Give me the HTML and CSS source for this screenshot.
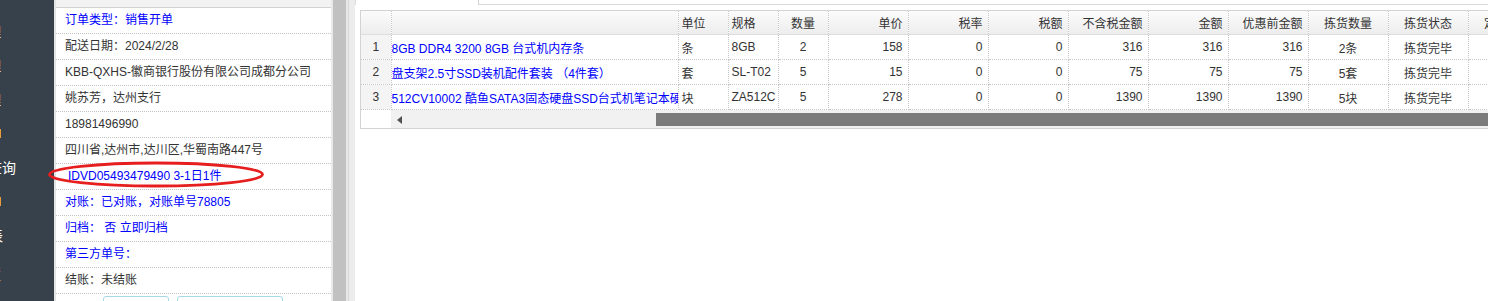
FILE: index.html
```html
<!DOCTYPE html>
<html>
<head>
	<meta charset="UTF-8">
	<meta name="viewport" content="width=device-width, initial-scale=1.0">
	<title>订单详情</title>
	<link rel="stylesheet" href="styles.css">
</head>
<body>
	<div class="page">
		<nav class="sidenav">
			<div class="nav-item"><span>订单管理</span></div>
			<div class="nav-item"><span>客户管理</span></div>
			<div class="nav-item"><span>商品管理</span></div>
			<div class="nav-item"><span class="nav-mark"></span></div>
			<div class="nav-item wide"><span>订单查询</span></div>
			<div class="nav-item"><span class="nav-mark"></span></div>
			<div class="nav-item half"><span>统计报表</span></div>
			<div class="nav-item low"><span>系统设置</span></div>
		</nav>

		<div class="info-panel">
			<div class="info-top"></div>
			<div class="info-row blue">订单类型：销售开单</div>
			<div class="info-row">配送日期：2024/2/28</div>
			<div class="info-row">KBB-QXHS-徽商银行股份有限公司成都分公司</div>
			<div class="info-row">姚苏芳，达州支行</div>
			<div class="info-row">18981496990</div>
			<div class="info-row">四川省,达州市,达川区,华蜀南路447号</div>
			<div class="info-row blue indent">IDVD05493479490 3-1日1件</div>
			<div class="info-row blue">对账：已对账，对账单号78805</div>
			<div class="info-row blue">归档： 否 立即归档</div>
			<div class="info-row blue">第三方单号：</div>
			<div class="info-row">结账：未结账</div>
			<div class="info-buttons">
				<span class="btn small">打印</span>
				<span class="btn">导出明细</span>
			</div>
		</div>
		<div class="vscroll"><div class="vscroll-thumb"></div></div>
		<div class="splitter"></div>

		<div class="main">
			<div class="tabs">
				<div class="tab"></div>
				<div class="tab-fill"></div>
			</div>
			<div class="grid">
				<table class="items">
					<colgroup>
						<col class="c-num"><col class="c-name"><col class="c-sm"><col class="c-sm"><col class="c-sm">
						<col class="c-md"><col class="c-md"><col class="c-md"><col class="c-md"><col class="c-md">
						<col class="c-md"><col class="c-md"><col class="c-md"><col class="c-md">
					</colgroup>
					<thead>
						<tr>
							<th class="num"></th>
							<th></th>
							<th>单位</th>
							<th>规格</th>
							<th class="center">数量</th>
							<th class="right">单价</th>
							<th class="right">税率</th>
							<th class="right">税额</th>
							<th class="right">不含税金额</th>
							<th class="right">金额</th>
							<th class="right">优惠前金额</th>
							<th class="center">拣货数量</th>
							<th class="center">拣货状态</th>
							<th class="center">定制说明</th>
						</tr>
					</thead>
					<tbody>
						<tr>
							<td class="num">1</td>
							<td class="name">8GB DDR4 3200 8GB 台式机内存条</td>
							<td>条</td>
							<td>8GB</td>
							<td class="center">2</td>
							<td class="right">158</td>
							<td class="right">0</td>
							<td class="right">0</td>
							<td class="right">316</td>
							<td class="right">316</td>
							<td class="right">316</td>
							<td class="center">2条</td>
							<td class="center">拣货完毕</td>
							<td></td>
						</tr>
						<tr>
							<td class="num">2</td>
							<td class="name">盘支架2.5寸SSD装机配件套装 （4件套）</td>
							<td>套</td>
							<td>SL-T02</td>
							<td class="center">5</td>
							<td class="right">15</td>
							<td class="right">0</td>
							<td class="right">0</td>
							<td class="right">75</td>
							<td class="right">75</td>
							<td class="right">75</td>
							<td class="center">5套</td>
							<td class="center">拣货完毕</td>
							<td></td>
						</tr>
						<tr>
							<td class="num">3</td>
							<td class="name">512CV10002 酷鱼SATA3固态硬盘SSD台式机笔记本硬盘</td>
							<td>块</td>
							<td>ZA512C</td>
							<td class="center">5</td>
							<td class="right">278</td>
							<td class="right">0</td>
							<td class="right">0</td>
							<td class="right">1390</td>
							<td class="right">1390</td>
							<td class="right">1390</td>
							<td class="center">5块</td>
							<td class="center">拣货完毕</td>
							<td></td>
						</tr>
					</tbody>
				</table>
				<div class="hscroll">
					<div class="hscroll-corner"></div>
					<div class="hscroll-track">
						<div class="hscroll-gap"><span class="arrow-left"></span></div>
						<div class="hscroll-thumb"></div>
					</div>
				</div>
			</div>
		</div>
	</div>

	<svg class="mark" width="218" height="28" viewBox="0 0 218 28">
		<ellipse cx="108" cy="13.5" rx="106.5" ry="11.5" fill="none" stroke="#e61e1e" stroke-width="2.8"/>
	</svg>
</body>
</html>
```

FILE: styles.css
```css
body {
	margin: 0;
	position: relative;
	font-family: "Liberation Sans", "Noto Sans CJK SC", sans-serif;
	font-size: 12px;
	color: #333;
	overflow: hidden;
	height: 301px;
}
.page {
	display: flex;
	height: 301px;
}

/* left navigation, mostly collapsed */
.sidenav {
	width: 54px;
	flex: none;
	background-color: #37414b;
	overflow: hidden;
	padding-top: 14px;
	box-sizing: border-box;
}
.nav-item {
	height: 34px;
	width: 201px;
	margin-left: -200px;
	display: flex;
	align-items: center;
	justify-content: flex-end;
	color: #fff;
	font-size: 14px;
	white-space: nowrap;
}
.nav-item.wide {
	width: 216px;
}
.nav-item.half {
	width: 203px;
}
.nav-item.low {
	margin-top: 4px;
}
.nav-mark {
	display: inline-block;
	width: 3px;
	height: 9px;
	background-color: #e89b3a;
}

/* order info */
.info-panel {
	width: 275px;
	flex: none;
	border-left: 2px solid #e4e4e4;
	overflow: hidden;
}
.info-top {
	height: 7px;
	background-color: #f2f2f2;
	border-bottom: 1px solid #d2d2d2;
}
.info-row {
	height: 25px;
	line-height: 25px;
	padding-left: 9px;
	border-bottom: 1px dotted #c4c4c4;
	white-space: nowrap;
}
.blue {
	color: #0000ff;
}
.indent {
	padding-left: 12px;
}
.info-buttons {
	display: flex;
	gap: 8px;
	padding: 2px 0 0 47px;
}
.btn {
	width: 104px;
	height: 20px;
	border: 1px solid #a6d8e8;
	border-radius: 3px;
	text-align: center;
	line-height: 22px;
	color: #9ab;
}
.btn.small {
	width: 64px;
}
.vscroll {
	width: 17px;
	flex: none;
	background-color: #e9e9e9;
	padding: 0 2px;
	box-sizing: border-box;
}
.vscroll-thumb {
	height: 100%;
	background-color: #c1c1c1;
}
.splitter {
	width: 6px;
	flex: none;
	border-left: 1px solid #d6d6d6;
	background-color: #ececec;
}

/* goods grid */
.main {
	flex: 1;
	overflow: hidden;
	background-color: #fff;
}
.tabs {
	display: flex;
	height: 5px;
}
.tab {
	width: 122px;
	border-left: 1px solid #dcdcdc;
	border-right: 1px solid #d0d0d0;
}
.tab-fill {
	flex: 1;
	border-bottom: 1px solid #dadada;
}
.grid {
	width: 1187px;
	margin: 5px 0 0 5px;
	border: 1px solid #d3d3d3;
}
.items {
	border-collapse: collapse;
	table-layout: fixed;
	width: 1187px;
}
.c-num { width: 30px; }
.c-name { width: 287px; }
.c-sm { width: 50px; }
.c-md { width: 80px; }
th, td {
	padding: 0 3px;
	white-space: nowrap;
	overflow: hidden;
	text-align: left;
	font-weight: normal;
	border-right: 1px dotted #c8c8c8;
}
th {
	height: 23px;
	background: linear-gradient(#fbfbfb, #ededed);
	border-bottom: 1px solid #dedede;
}
td {
	height: 24px;
	border-bottom: 1px dotted #c8c8c8;
}
td.name {
	color: #0000ff;
	padding-left: 0;
	text-overflow: clip;
}
td.num {
	text-align: center;
	background-color: #f4f4f4;
}
th.num {
	background: linear-gradient(#fbfbfb, #ededed);
}
.center {
	text-align: center;
}
.right {
	text-align: right;
	padding-right: 5px;
}
.hscroll {
	display: flex;
	height: 18px;
}
.hscroll-corner {
	width: 30px;
	background-color: #fff;
}
.hscroll-track {
	flex: 1;
	display: flex;
	align-items: center;
	background-color: #f1f1f1;
	padding: 3px 0 2px;
}
.hscroll-gap {
	width: 265px;
	height: 100%;
	display: flex;
	align-items: center;
	padding-left: 6px;
	box-sizing: border-box;
}
.arrow-left {
	width: 0;
	height: 0;
	border-top: 4px solid transparent;
	border-bottom: 4px solid transparent;
	border-right: 5px solid #505050;
}
.hscroll-thumb {
	flex: 1;
	height: 100%;
	background-color: #7b7b7b;
}

/* red hand-drawn mark over the tracking number */
.mark {
	position: absolute;
	left: 48px;
	top: 161px;
}
```
